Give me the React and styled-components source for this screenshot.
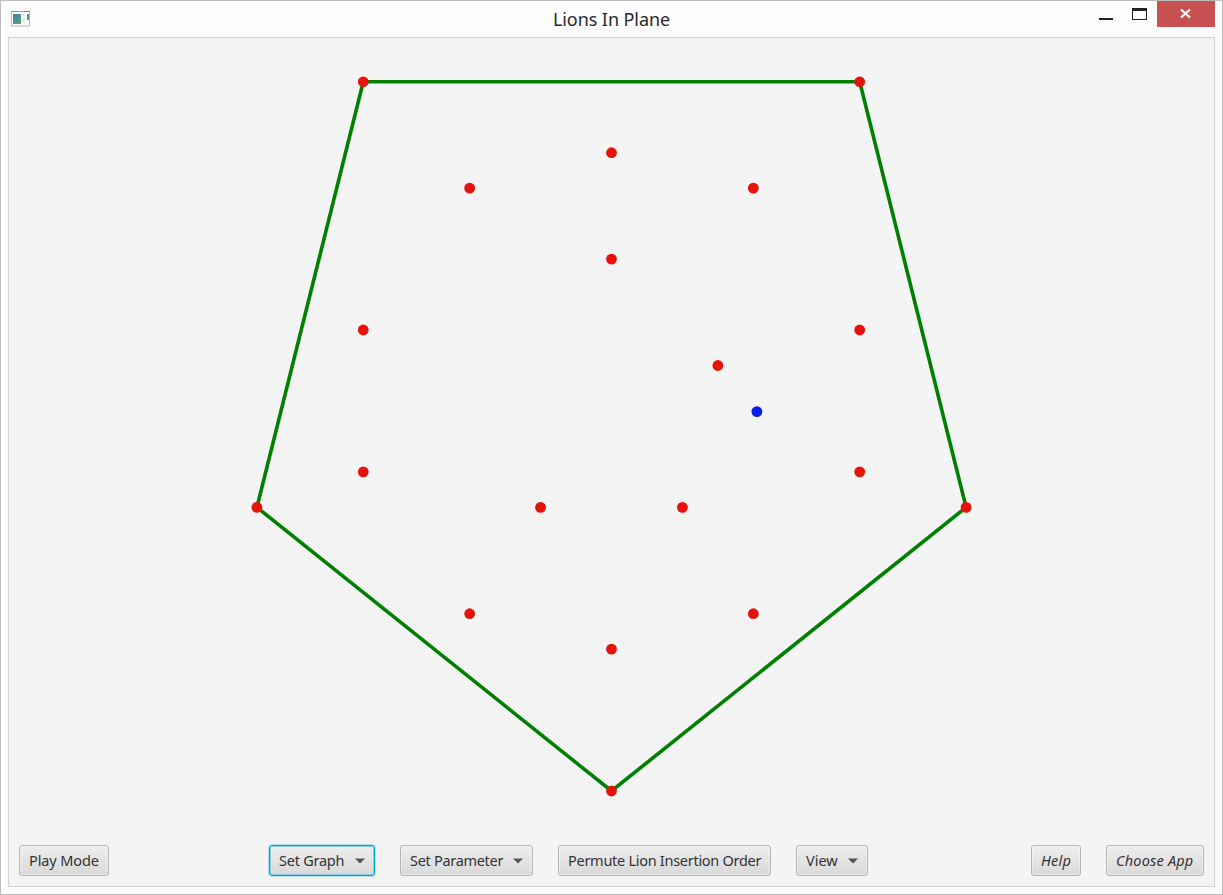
import React from "react";
import styled, { createGlobalStyle, css } from "styled-components";

const GlobalStyle = createGlobalStyle`
  *, *::before, *::after { box-sizing: border-box; }
  html, body { margin: 0; padding: 0; overflow: hidden; }
  body { font-family: "Noto Sans", "Open Sans", sans-serif; }
`;

const Window = styled.div`
  width: 1223px;
  height: 895px;
  display: flex;
  flex-direction: column;
  padding: 0 7px 7px;
  background: #fcfcfc;
  border: 1px solid #bcbcbc;
`;

const TitleBar = styled.header`
  height: 36px;
  flex: none;
  display: grid;
  grid-template-columns: 1fr auto 1fr;
  align-items: start;
`;

const AppIcon = styled.svg`
  display: block;
  margin: 10px 0 0 3px;
`;

const Title = styled.h1`
  margin: 0;
  font-size: 18px;
  font-weight: 400;
  line-height: 36px;
  letter-spacing: ${(p) => p.$tracking}px;
  color: #2a2a2a;
  white-space: nowrap;
`;

const WindowControls = styled.div`
  display: flex;
  justify-content: flex-end;
`;

const ControlButton = styled.button`
  width: ${(p) => p.$width}px;
  height: 26px;
  padding: 0;
  border: 0;
  background: ${(p) => (p.$danger ? "#c75050" : "transparent")};
  svg { display: block; }
`;

const Panel = styled.main`
  flex: 1;
  display: flex;
  flex-direction: column;
  border: 1px solid #d3d3d3;
  background: #f4f4f4;
`;

const Plane = styled.svg`
  display: block;
  width: 1205px;
  height: 807px;
  flex: none;
`;

const Toolbar = styled.footer`
  display: flex;
  gap: 25px;
  padding: 0 10px;
`;

const Group = styled.div`
  display: flex;
  gap: 25px;
  margin-left: ${(p) => p.$offset};
`;

const Button = styled.button`
  width: ${(p) => p.$width}px;
  height: 31px;
  display: flex;
  align-items: center;
  justify-content: space-between;
  padding: 0 9px 0 9px;
  border: 1px solid #b5b5b5;
  border-radius: 3px;
  background: linear-gradient(#eeeeee, #d9d9d9);
  box-shadow: inset 0 0 0 1px rgba(255, 255, 255, 0.4);
  font-family: inherit;
  font-size: 14.5px;
  line-height: 29px;
  font-style: ${(p) => (p.$italic ? "italic" : "normal")};
  color: #333333;
  white-space: nowrap;
  ${(p) =>
    p.$focused &&
    css`
      border-color: #039ed3;
      box-shadow: 0 0 0 1px #b5e0f0, inset 0 0 0 1px #8fcfe6;
    `}
`;

const Label = styled.span`
  letter-spacing: ${(p) => p.$tracking}px;
`;

const Arrow = styled.svg`
  display: block;
  flex: none;
`;

const UNIT = 35.46;
const ORIGIN = { x: 602.5, y: 43.8 };
const at = ([x, y]) => [ORIGIN.x + x * UNIT, ORIGIN.y + y * UNIT];

const hull = [[-7, 0], [7, 0], [10, 12], [0, 20], [-10, 12]];
const vertices = [
  ...hull,
  [0, 2], [-4, 3], [4, 3], [0, 5], [-7, 7], [7, 7], [3, 8],
  [-7, 11], [7, 11], [-2, 12], [2, 12], [-4, 15], [4, 15], [0, 16],
];
const man = [4.1, 9.3];

function Dot({ point, color }) {
  const [cx, cy] = at(point);
  return <circle cx={cx} cy={cy} r="5.4" fill={color} />;
}

function ToolButton({ label, tracking, menu, ...rest }) {
  return (
    <Button {...rest}>
      <Label $tracking={tracking}>{label}</Label>
      {menu && (
        <Arrow width="10" height="6" viewBox="0 0 10 6">
          <path d="M0 0.5H10L5 5.5Z" fill="#555" />
        </Arrow>
      )}
    </Button>
  );
}

export default function App() {
  return (
    <>
      <GlobalStyle />
      <Window>
        <TitleBar>
          <AppIcon width="19" height="16" viewBox="0 0 19 16">
            <defs>
              <linearGradient id="pane" x1="0" y1="0" x2="1" y2="1">
                <stop offset="0" stopColor="#4a79ad" />
                <stop offset="1" stopColor="#4caf68" />
              </linearGradient>
            </defs>
            <rect x="0.5" y="0.5" width="18" height="14.5" fill="#fff" stroke="#b2b7ba" />
            <path d="M0 0.5H19" stroke="#8c999f" />
            <path d="M13 0.5H18" stroke="#587b91" strokeDasharray="1 1" />
            <rect x="2" y="3" width="8" height="10" fill="url(#pane)" />
            <path d="M11 3H14V6H11ZM11 7H14V12H11Z" fill="#e5e7e8" />
            <rect x="16" y="3" width="2" height="6" fill="url(#pane)" />
          </AppIcon>
          <Title $tracking={-0.08}>Lions In Plane</Title>
          <WindowControls>
            <ControlButton $width={34} aria-label="Minimize">
              <svg width="34" height="26"><path d="M10 17H24V19H10Z" fill="#222" /></svg>
            </ControlButton>
            <ControlButton $width={34} aria-label="Maximize">
              <svg width="34" height="26">
                <path fillRule="evenodd" d="M9 7H24V19H9ZM10 10V18H23V10Z" fill="#222" />
              </svg>
            </ControlButton>
            <ControlButton $width={58} $danger aria-label="Close">
              <svg width="58" height="26">
                <path d="M24 8.5L33 16.5M33 8.5L24 16.5" stroke="#fff" strokeWidth="2.3" />
              </svg>
            </ControlButton>
          </WindowControls>
        </TitleBar>
        <Panel>
          <Plane>
            <polygon
              points={hull.map((p) => at(p).join(",")).join(" ")}
              fill="none"
              stroke="#008000"
              strokeWidth="3.6"
            />
            {vertices.map((p) => (
              <Dot key={p.join()} point={p} color="#e6130b" />
            ))}
            <Dot point={man} color="#0a1ee6" />
          </Plane>
          <Toolbar>
            <ToolButton $width={90} label="Play Mode" tracking={-0.12} />
            <Group $offset="135px">
              <ToolButton $width={106} label="Set Graph" tracking={-0.24} menu $focused />
              <ToolButton $width={133} label="Set Parameter" tracking={-0.3} menu />
              <ToolButton $width={213} label="Permute Lion Insertion Order" tracking={-0.28} />
              <ToolButton $width={72} label="View" tracking={0} menu />
            </Group>
            <Group $offset="auto">
              <ToolButton $width={50} label="Help" tracking={0.2} $italic />
              <ToolButton $width={98} label="Choose App" tracking={0.2} $italic />
            </Group>
          </Toolbar>
        </Panel>
      </Window>
    </>
  );
}
